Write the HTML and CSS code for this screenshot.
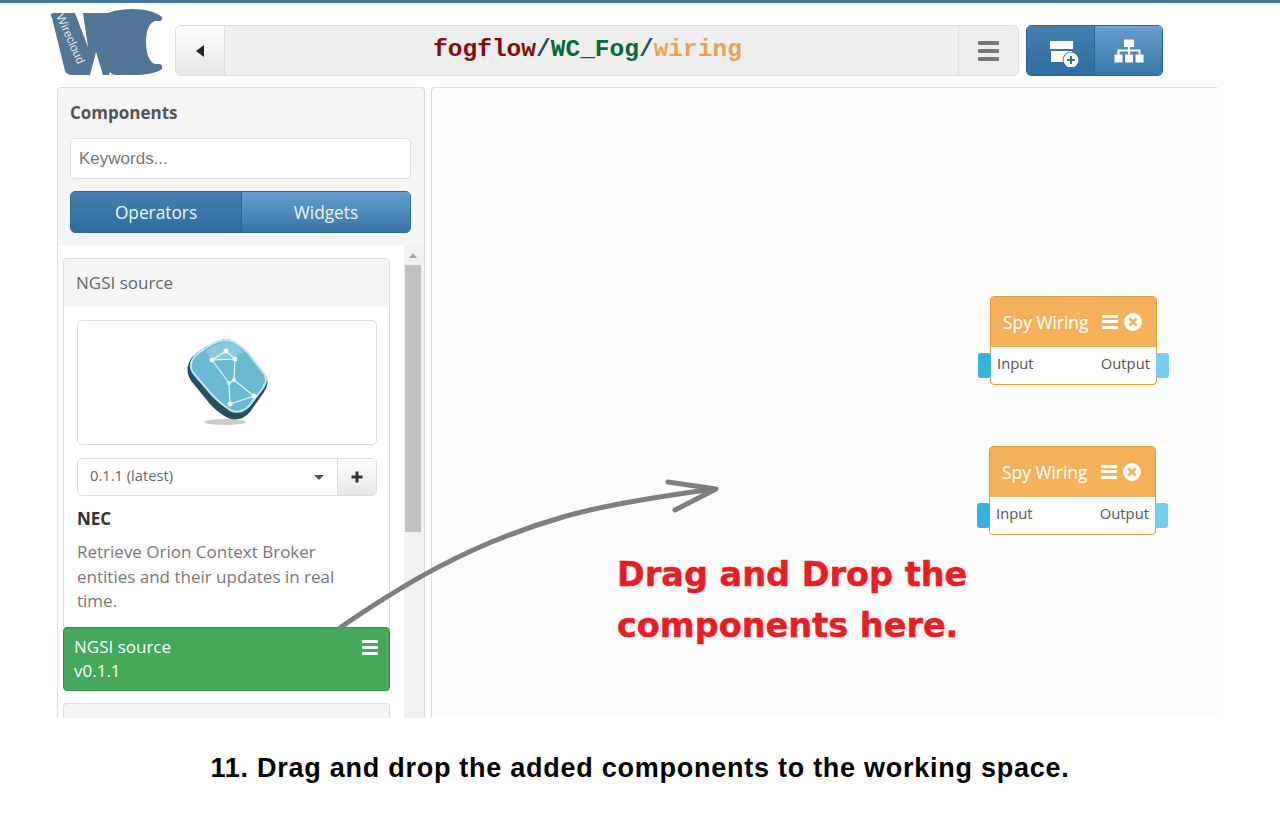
FILE: index.html
```html
<!DOCTYPE html>
<html lang="en">
<head>
    <meta charset="UTF-8">
    <title>Wirecloud wiring</title>
    <link rel="stylesheet" href="styles.css">
</head>
<body>
<div class="top-line"></div>

<header class="header">
    <svg class="logo" viewBox="50 8 113 68" width="113" height="68">
        <path fill="#527696" d="M52 18 Q49 13 54 13 L75 13 L88 47 L83 13 L108 13 C116 10 124 9 132 9 C146 9 156 12 162 17 Q163 20 160 21 L155 21 C149 23 146 31 146 42 C146 53 149 62 155 64 L160 64 Q163 65 162 69 C156 73 146 75 132 75 L116 75 Q112 75 110 72 L109 75 L103 75 L96 52 L90 75 L72 75 Q67 75 65 71 Z"/>
        <text class="logo-text" transform="translate(56 16) rotate(66)">Wirecloud</text>
    </svg>
    <div class="path-bar">
        <button class="back-btn"><span class="back-arrow"></span></button>
        <div class="path"><span class="path-user">fogflow</span><span class="path-sep">/</span><span class="path-name">WC_Fog</span><span class="path-sep">/</span><span class="path-view">wiring</span></div>
        <button class="menu-btn"><span class="burger"><i></i><i></i><i></i></span></button>
    </div>
    <div class="tool-btns">
        <button class="tool-btn dark">
            <svg class="add-box" viewBox="0 0 32 32" width="32" height="32">
                <path fill="#fff" d="M2 6 H25 V14 H2 Z M3 16 H24 V17 A8 8 0 0 0 15 27 H3 Z"/>
                <circle cx="23" cy="25" r="7.500" fill="#fff"/>
                <path stroke="#2f6fa3" stroke-width="2" d="M23 21 V29 M19 25 H27"/>
            </svg>
        </button>
        <button class="tool-btn light">
            <svg viewBox="0 0 30 24" width="30" height="24">
                <path fill="#fff" d="M10 0.500 H20 V8 H10 Z M0.500 15.500 H8.500 V23.500 H0.500 Z M11 15.500 H19 V23.500 H11 Z M21.500 15.500 H29.500 V23.500 H21.500 Z"/>
                <path stroke="#fff" stroke-width="2" fill="none" d="M15 8 V15.500 M4.500 15.500 V11.500 H25.500 V15.500"/>
            </svg>
        </button>
    </div>
</header>

<main class="main">
    <aside class="sidebar">
        <div class="side-head">
            <h2 class="side-title">Components</h2>
            <div class="keywords">Keywords...</div>
            <div class="tabs">
                <div class="tab active">Operators</div>
                <div class="tab">Widgets</div>
            </div>
        </div>
        <div class="side-list">
            <div class="list-body">
                <section class="card">
                    <div class="card-head">NGSI source</div>
                    <div class="card-body">
                        <div class="thumb">
                            <svg viewBox="0 0 110 110" width="110" height="110">
                                <ellipse cx="53" cy="94" rx="21" ry="3" fill="#ccc"/>
                                <path fill="#24505f" d="M20 29 Q40 12 55 11 Q64 12 76 25 L92 46 Q99 53 92 64 L78 84 Q68 95 56 90 Q46 85 38 76 L20 54 Q11 42 20 29 Z"/>
                                <path fill="#6bb9d2" stroke="#c4e6ee" stroke-width="2" d="M22 29 Q41 12 55 12 Q64 13 76 25 L91 44 Q97 51 91 60 L77 78 Q68 87 58 82 Q49 76 41 68 L23 47 Q15 38 22 29 Z"/>
                                <path fill="#a9dbe8" d="M34 23 Q46 14 55 14 Q63 15 72 24 Q58 33 40 32 Z" opacity=".5"/>
                                <path fill="none" stroke="#e8f6fa" stroke-width="1.200" d="M40 32 L54 23 L63 31 Z M40 32 L57 55 M63 31 L62 52 L57 55 L58 76 L82 68 L62 52"/>
                                <g fill="#f2fbfd">
                                    <circle cx="40" cy="32" r="2.500"/>
                                    <circle cx="54" cy="23" r="2.500"/>
                                    <circle cx="63" cy="31" r="2.500"/>
                                    <circle cx="62" cy="52" r="2"/>
                                    <circle cx="57" cy="55" r="2"/>
                                    <circle cx="82" cy="68" r="2.500"/>
                                    <circle cx="58" cy="76" r="2.500"/>
                                </g>
                            </svg>
                        </div>
                        <div class="version-row">
                            <div class="version">0.1.1 (latest)<span class="caret"></span></div>
                            <div class="add-btn">
                                <svg viewBox="0 0 14 14" width="14" height="14"><path stroke="#333" stroke-width="3" d="M7 1.500 V12.500 M1.500 7 H12.500"/></svg>
                            </div>
                        </div>
                        <div class="vendor">NEC</div>
                        <p class="desc">Retrieve Orion Context Broker entities and their updates in real time.</p>
                    </div>
                </section>
                <div class="version-item">
                    <div>NGSI source<br>v0.1.1</div>
                    <span class="burger white"><i></i><i></i><i></i></span>
                </div>
                <section class="card next"></section>
            </div>
            <div class="scrollbar">
                <span class="scroll-up"></span>
                <div class="scroll-thumb"></div>
            </div>
        </div>
    </aside>

    <section class="canvas">
        <div class="node first">
            <span class="port in"></span>
            <span class="port out"></span>
            <div class="node-head">
                <span class="node-title">Spy Wiring</span>
                <span class="burger small"><i></i><i></i><i></i></span>
                <svg viewBox="0 0 18 18" width="18" height="18"><circle cx="9" cy="9" r="9" fill="#fff"/><path stroke="#f2b15a" stroke-width="2.600" d="M5.500 5.500 L12.500 12.500 M12.500 5.500 L5.500 12.500"/></svg>
            </div>
            <div class="node-body"><span>Input</span><span>Output</span></div>
        </div>
        <div class="node second">
            <span class="port in"></span>
            <span class="port out"></span>
            <div class="node-head">
                <span class="node-title">Spy Wiring</span>
                <span class="burger small"><i></i><i></i><i></i></span>
                <svg viewBox="0 0 18 18" width="18" height="18"><circle cx="9" cy="9" r="9" fill="#fff"/><path stroke="#f2b15a" stroke-width="2.600" d="M5.500 5.500 L12.500 12.500 M12.500 5.500 L5.500 12.500"/></svg>
            </div>
            <div class="node-body"><span>Input</span><span>Output</span></div>
        </div>
        <div class="note">Drag and Drop the<br>components here.</div>
    </section>
</main>

<p class="caption">11. Drag and drop the added components to the working space.</p>

<!-- arrow drawn over sidebar and canvas -->
<svg class="arrow" viewBox="0 0 1280 819" width="1280" height="819">
    <path fill="none" stroke="#7f7f7f" stroke-width="5" stroke-linecap="round" stroke-linejoin="round" d="M341 627 C395 590 465 545 563 517 C590 509 640 499 714 489 M668 482 L716 489 L675 510"/>
</svg>
</body>
</html>
```

FILE: styles.css
```css
* {
    box-sizing: border-box;
}

body {
    position: relative;
    margin: 0;
    height: 819px;
    overflow: hidden;
    background: #fff;
    font-family: "Open Sans", sans-serif;
    color: #555;
}

button {
    padding: 0;
    border: 0;
    font: inherit;
}

.top-line {
    height: 3px;
    background: #44799b;
}

/* header */

.header {
    display: flex;
    align-items: flex-end;
    height: 73px;
    padding-left: 50px;
}

.logo {
    display: block;
    flex: none;
}

.logo-text {
    font-family: "Liberation Sans", sans-serif;
    font-size: 12px;
    fill: #dfe7ee;
}

.path-bar {
    display: flex;
    width: 844px;
    height: 51px;
    margin-left: 12px;
    border: 1px solid #ddd;
    border-radius: 6px;
    background: #eee;
    overflow: hidden;
}

.back-btn {
    display: flex;
    align-items: center;
    justify-content: center;
    width: 49px;
    border-right: 1px solid #ddd;
    background: linear-gradient(#fff, #e6e6e6);
}

.back-arrow {
    border-top: 6px solid transparent;
    border-bottom: 6px solid transparent;
    border-right: 8px solid #222;
}

.path {
    flex: 1;
    padding-right: 8px;
    text-align: center;
    font-family: "Liberation Mono", monospace;
    font-size: 24.500px;
    font-weight: bold;
    line-height: 47px;
}

.path-user {
    color: #850a0a;
}

.path-sep {
    color: #24505e;
}

.path-name {
    color: #046a38;
}

.path-view {
    color: #eea24f;
}

.menu-btn {
    display: flex;
    align-items: center;
    justify-content: center;
    width: 60px;
    border-left: 1px solid #ddd;
    background: #eee;
}

.burger {
    display: flex;
    flex-direction: column;
    gap: 4px;
    width: 21px;
}

.burger i {
    display: block;
    height: 4px;
    border-radius: 1px;
    background: #777;
}

.burger.white {
    width: 16px;
    gap: 3px;
}

.burger.white i,
.burger.small i {
    height: 3px;
    background: #fff;
}

.burger.small {
    width: 16px;
    gap: 2.500px;
}

.tool-btns {
    display: flex;
    height: 51px;
    margin-left: 7px;
    border: 1px solid #2b6695;
    border-radius: 5px;
    overflow: hidden;
}

.tool-btn {
    display: flex;
    align-items: center;
    justify-content: center;
    height: 100%;
}

.tool-btn.dark {
    width: 68px;
    border-right: 1px solid #2b6695;
    background: linear-gradient(#467fae, #2d6ca2);
}

.tool-btn.light {
    width: 67px;
    background: linear-gradient(#669fcf, #3676a8);
}

.add-box {
    margin-left: 6px;
}

/* main area */

.main {
    display: flex;
    gap: 6px;
    width: 1160px;
    height: 631px;
    margin: 11px 0 0 57px;
}

.sidebar {
    display: flex;
    flex-direction: column;
    width: 368px;
    border: 1px solid #ddd;
    border-bottom: 0;
    border-radius: 4px 4px 0 0;
    background: #f5f5f5;
}

.side-head {
    height: 157px;
    padding: 0 13px 0 12px;
}

.side-title {
    margin: 0;
    padding-top: 14px;
    height: 50px;
    font-size: 17px;
    line-height: 22px;
    font-weight: bold;
    color: #555;
}

.keywords {
    height: 41px;
    padding: 0 8px;
    border: 1px solid #ddd;
    border-radius: 5px;
    background: #fff;
    font-family: "Liberation Sans", sans-serif;
    font-size: 17px;
    line-height: 39px;
    color: #777;
}

.tabs {
    display: flex;
    height: 42px;
    margin-top: 12px;
    border: 1px solid #2b6695;
    border-radius: 5px;
    overflow: hidden;
    color: #eef5fa;
    font-size: 17.300px;
    line-height: 41px;
    text-align: center;
}

.tab {
    flex: 1;
    background: linear-gradient(#669fcf, #3676a8);
}

.tab.active {
    flex: none;
    width: 171px;
    border-right: 1px solid #2b6695;
    background: linear-gradient(#467fae, #2d6ca2);
}

.side-list {
    display: flex;
    flex: 1;
    min-height: 0;
}

.list-body {
    width: 346px;
    padding: 13px 14px 0 5px;
    background: #fff;
    overflow: hidden;
}

.card {
    border: 1px solid #ddd;
    border-bottom: 0;
    border-radius: 4px 4px 0 0;
}

.card-head {
    height: 48px;
    padding-left: 12px;
    background: #f5f5f5;
    font-size: 17px;
    line-height: 48px;
    color: #666;
}

.card-body {
    height: 320px;
    padding: 13px 12px 0 13px;
}

.thumb {
    display: flex;
    align-items: center;
    justify-content: center;
    height: 125px;
    border: 1px solid #ddd;
    border-radius: 5px;
}

.version-row {
    display: flex;
    height: 38px;
    margin-top: 13px;
    border: 1px solid #ddd;
    border-radius: 5px;
    overflow: hidden;
    font-size: 14.700px;
    line-height: 33px;
    color: #666;
}

.version {
    display: flex;
    align-items: center;
    justify-content: space-between;
    flex: 1;
    padding: 0 13px 3px 12px;
}

.caret {
    margin-top: 3px;
    border-top: 5px solid #555;
    border-left: 5px solid transparent;
    border-right: 5px solid transparent;
}

.add-btn {
    display: flex;
    align-items: center;
    justify-content: center;
    width: 39px;
    border-left: 1px solid #ddd;
    background: linear-gradient(#fff, #e6e6e6);
}

.vendor {
    margin-top: 12px;
    font-size: 17px;
    font-weight: bold;
    line-height: 22px;
    color: #333;
}

.desc {
    margin: 10px 0 0;
    font-size: 17px;
    line-height: 24.500px;
    color: #777;
}

.version-item {
    display: flex;
    justify-content: space-between;
    height: 64px;
    margin: 0;
    padding: 7px 11px 0 10px;
    border: 1px solid #3a8a4a;
    border-radius: 4px;
    background: #46a85a;
    color: #fff;
    font-size: 17px;
    line-height: 24px;
}

.version-item .burger {
    margin-top: 5px;
}

.card.next {
    height: 60px;
    margin-top: 12px;
    background: #f5f5f5;
}

.scrollbar {
    flex: 1;
    padding: 5px 3px 0 1px;
    background: #f1f1f1;
}

.scroll-up {
    display: block;
    width: 0;
    margin: 3px auto 7px;
    border-bottom: 5px solid #a3a3a3;
    border-left: 4px solid transparent;
    border-right: 4px solid transparent;
}

.scroll-thumb {
    height: 267px;
    background: #c1c1c1;
}

/* wiring canvas */

.canvas {
    position: relative;
    flex: 1;
    border: 1px solid #ddd;
    border-right: 0;
    border-bottom: 0;
    border-radius: 4px 0 0 0;
    background: #fcfcfc;
}

.node {
    position: absolute;
    width: 167px;
    height: 89px;
    border: 1px solid #e59a3c;
    border-radius: 4px;
    background: #fff;
}

.node.first {
    left: 558px;
    top: 208px;
}

.node.second {
    left: 557px;
    top: 358px;
}

.port {
    position: absolute;
    top: 56px;
    width: 13px;
    height: 25px;
    border-radius: 3px;
}

.port.in {
    left: -13px;
    background: #35b3df;
}

.port.out {
    right: -13px;
    background: #74d0ee;
}

.node-head {
    display: flex;
    align-items: center;
    height: 50px;
    padding: 0 14px 1px 12px;
    background: #f2b15a;
    color: #fff;
    font-size: 17.400px;
}

.node-title {
    flex: 1;
}

.node-head .burger {
    margin-right: 6px;
}

.node-body {
    display: flex;
    justify-content: space-between;
    padding: 0 6px;
    font-size: 14.800px;
    line-height: 33px;
    color: #555;
}

.note {
    position: absolute;
    left: 185px;
    top: 462px;
    font-family: "DejaVu Sans", sans-serif;
    font-size: 33.500px;
    font-weight: bold;
    line-height: 50.500px;
    color: #ed1c24;
    white-space: nowrap;
    -webkit-text-stroke: .5px #ed1c24;
}

.caption {
    margin: 34px 0 0;
    text-align: center;
    font-family: "Liberation Sans", sans-serif;
    font-size: 27px;
    font-weight: bold;
    line-height: 32px;
    letter-spacing: .74px;
    color: #000;
}

.arrow {
    position: absolute;
    left: 0;
    top: 0;
    pointer-events: none;
}
```
